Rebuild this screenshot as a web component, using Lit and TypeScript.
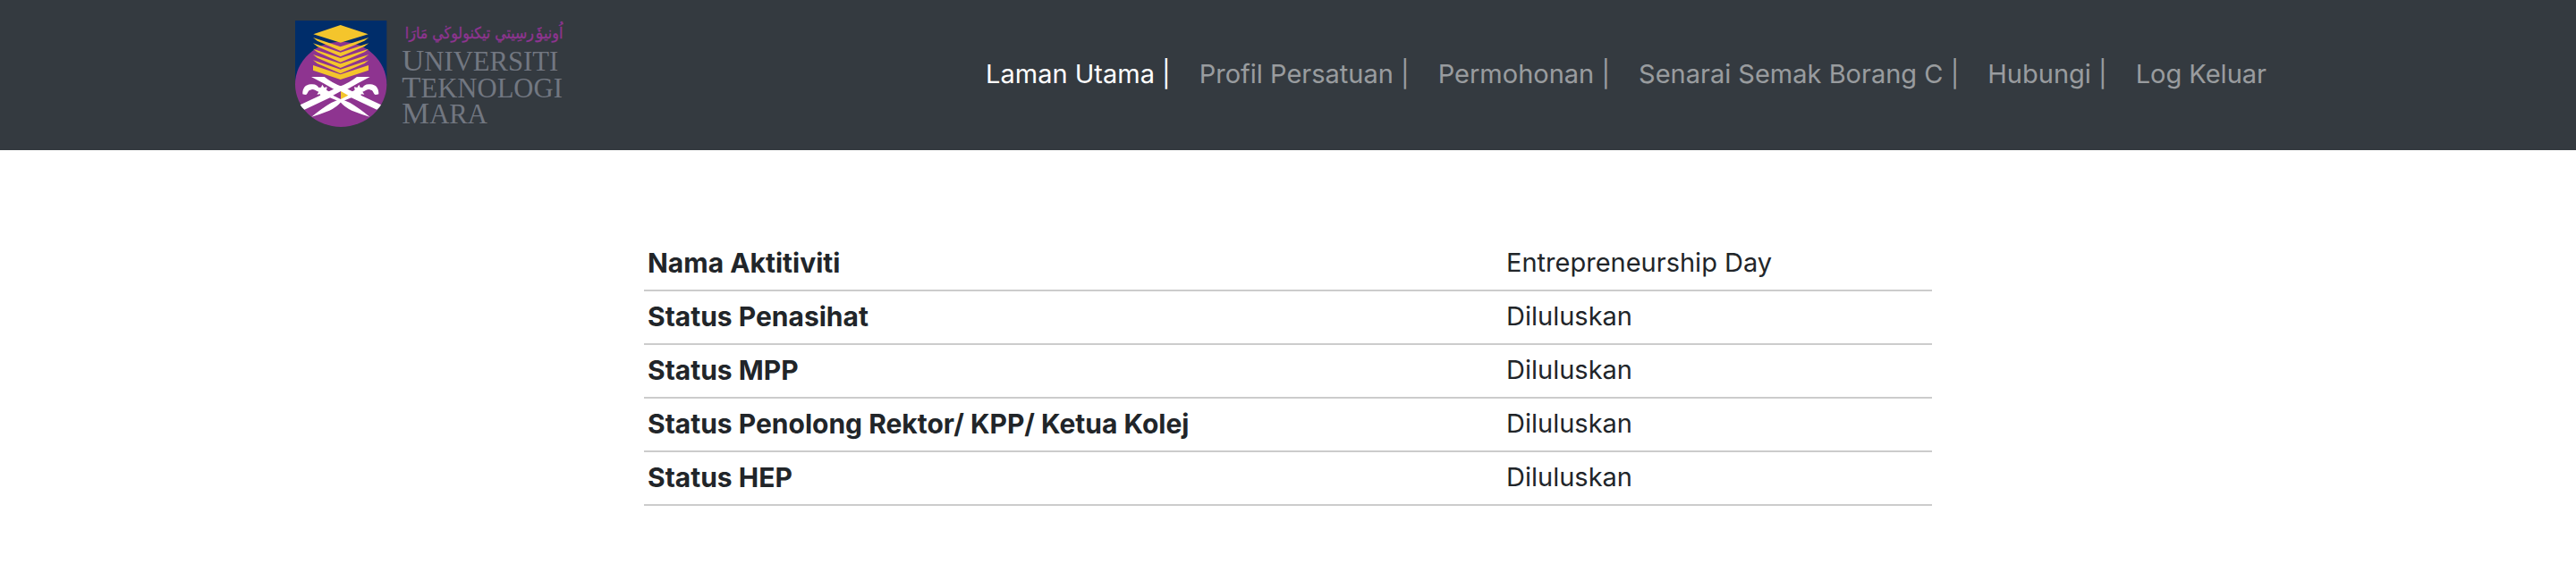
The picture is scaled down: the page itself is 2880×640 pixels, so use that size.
import { LitElement, html, css, svg } from "lit";
import { customElement, property } from "lit/decorators.js";

const CHEVRONS = [0, 1, 2, 3, 4];

const sword = () => svg`
  <path d="M84 213H128Q156 235 190 247L318 307Q313 317 304 323L166 258Q124 233 84 213Z" />
  <path d="M55 271C54 251 65 239 82 238C98 236 106 243 109 249L117 248 121 239 127 249 137 247 135 257Q160 271 186 288L214 300Q243 317 280 347Q250 338 220 326Q196 315 181 297L136 278 123 275 115 279 114 271 103 272 109 263C99 260 90 251 81 257C71 259 74 269 66 273Q60 273 55 271Z" />
`;

@customElement("uitm-logo")
export class UitmLogo extends LitElement {
  static styles = css`
    :host {
      display: block;
    }
    .logo {
      display: block;
      width: 300px;
      height: 124px;
    }
    .word {
      font-family: "Liberation Serif", serif;
      font-size: 92px;
      fill: #727781;
    }
    .initial {
      font-size: 104px;
    }
    .jawi {
      font-family: "DejaVu Sans Condensed", "DejaVu Sans", sans-serif;
      font-size: 53px;
      fill: #8e3490;
      stroke: #8e3490;
      stroke-width: 1px;
    }
  `;

  render() {
    return html`
      <svg class="logo" viewBox="30 21 900 372" role="img" aria-label="Universiti Teknologi MARA">
        <path fill="#002d6a" d="M30 24H337V238H30Z" />
        <ellipse cx="183.500" cy="238" rx="153.500" ry="143" fill="#8e3490" />
        <g fill="#f4c52c">
          <path d="M91 70 182 39 275 70 182 98Z" />
          ${CHEVRONS.map(
            (i) => svg`<path transform="translate(0 ${i * 19})" d="M90 81 182 112 277 81 262 92 182 126 104 92Z" />`
          )}
          <path d="M90 174 182 205 276 174V191L182 222 90 191Z" />
        </g>
        <g fill="#fff">${sword()}</g>
        <g fill="#fff" transform="matrix(-1 0 0 1 365 0)">${sword()}</g>
        <path fill="#8e3490" d="M183 261V288L157 275Z" />
        <path fill="#f4c52c" d="M183 261 208 275 183 288Z" />
        <text class="jawi" x="928" y="84" direction="rtl" lang="ms-Arab">اُونيۏَرسِيتي تيكنولوڬي مَارَا</text>
        <text class="word" x="388" y="193"><tspan class="initial">U</tspan>NIVERSITI</text>
        <text class="word" x="388" y="281"><tspan class="initial">T</tspan>EKNOLOGI</text>
        <text class="word" x="388" y="368"><tspan class="initial">M</tspan>ARA</text>
      </svg>
    `;
  }
}

@customElement("site-navbar")
export class SiteNavbar extends LitElement {
  @property({ attribute: false }) items: string[] = [];

  static styles = css`
    :host {
      display: block;
      background: #343a40;
    }
    .container {
      box-sizing: border-box;
      max-width: 2280px;
      margin: 0 auto;
      padding: 22px 30px;
      display: flex;
      align-items: center;
      justify-content: space-between;
    }
    .brand {
      display: block;
    }
    .menu {
      display: flex;
      margin: 0;
      padding: 0;
      list-style: none;
    }
    .link {
      display: block;
      padding: 15px 16px 17px;
      line-height: 48px;
      color: rgba(255, 255, 255, 0.5);
      text-decoration: none;
      white-space: nowrap;
    }
    .active {
      color: #fff;
    }
  `;

  render() {
    return html`
      <nav class="container">
        <a class="brand" href="#"><uitm-logo></uitm-logo></a>
        <ul class="menu">
          ${this.items.map(
            (item, i) => html`<li>
              <a class="link ${i === 0 ? "active" : ""}" href="#">${item}${i < this.items.length - 1 ? " |" : ""}</a>
            </li>`
          )}
        </ul>
      </nav>
    `;
  }
}

@customElement("app-root")
export class AppRoot extends LitElement {
  private menu = ["Laman Utama", "Profil Persatuan", "Permohonan", "Senarai Semak Borang C", "Hubungi", "Log Keluar"];

  private rows = [
    ["Nama Aktitiviti", "Entrepreneurship Day"],
    ["Status Penasihat", "Diluluskan"],
    ["Status MPP", "Diluluskan"],
    ["Status Penolong Rektor/ KPP/ Ketua Kolej", "Diluluskan"],
    ["Status HEP", "Diluluskan"],
  ];

  static styles = css`
    :host {
      display: block;
      background: #fff;
      color: #212529;
      font-family: Inter, "Liberation Sans", sans-serif;
      font-size: 29px;
      line-height: 48px;
    }
    .content {
      padding: 98px 0 48px;
    }
    .status {
      width: 50%;
      margin: 0 auto;
      border-spacing: 0;
      table-layout: fixed;
    }
    .name,
    .value {
      padding: 4px 4px 6px;
      border-bottom: 2px solid #ccc;
      text-align: left;
      vertical-align: top;
    }
    .name {
      width: 66.67%;
      box-sizing: border-box;
      font-size: 30px;
      font-weight: 700;
    }
  `;

  render() {
    return html`
      <site-navbar .items=${this.menu}></site-navbar>
      <main class="content">
        <table class="status">
          <tbody>
            ${this.rows.map(
              ([name, value]) => html`<tr>
                <th class="name" scope="row">${name}</th>
                <td class="value">${value}</td>
              </tr>`
            )}
          </tbody>
        </table>
      </main>
    `;
  }
}
